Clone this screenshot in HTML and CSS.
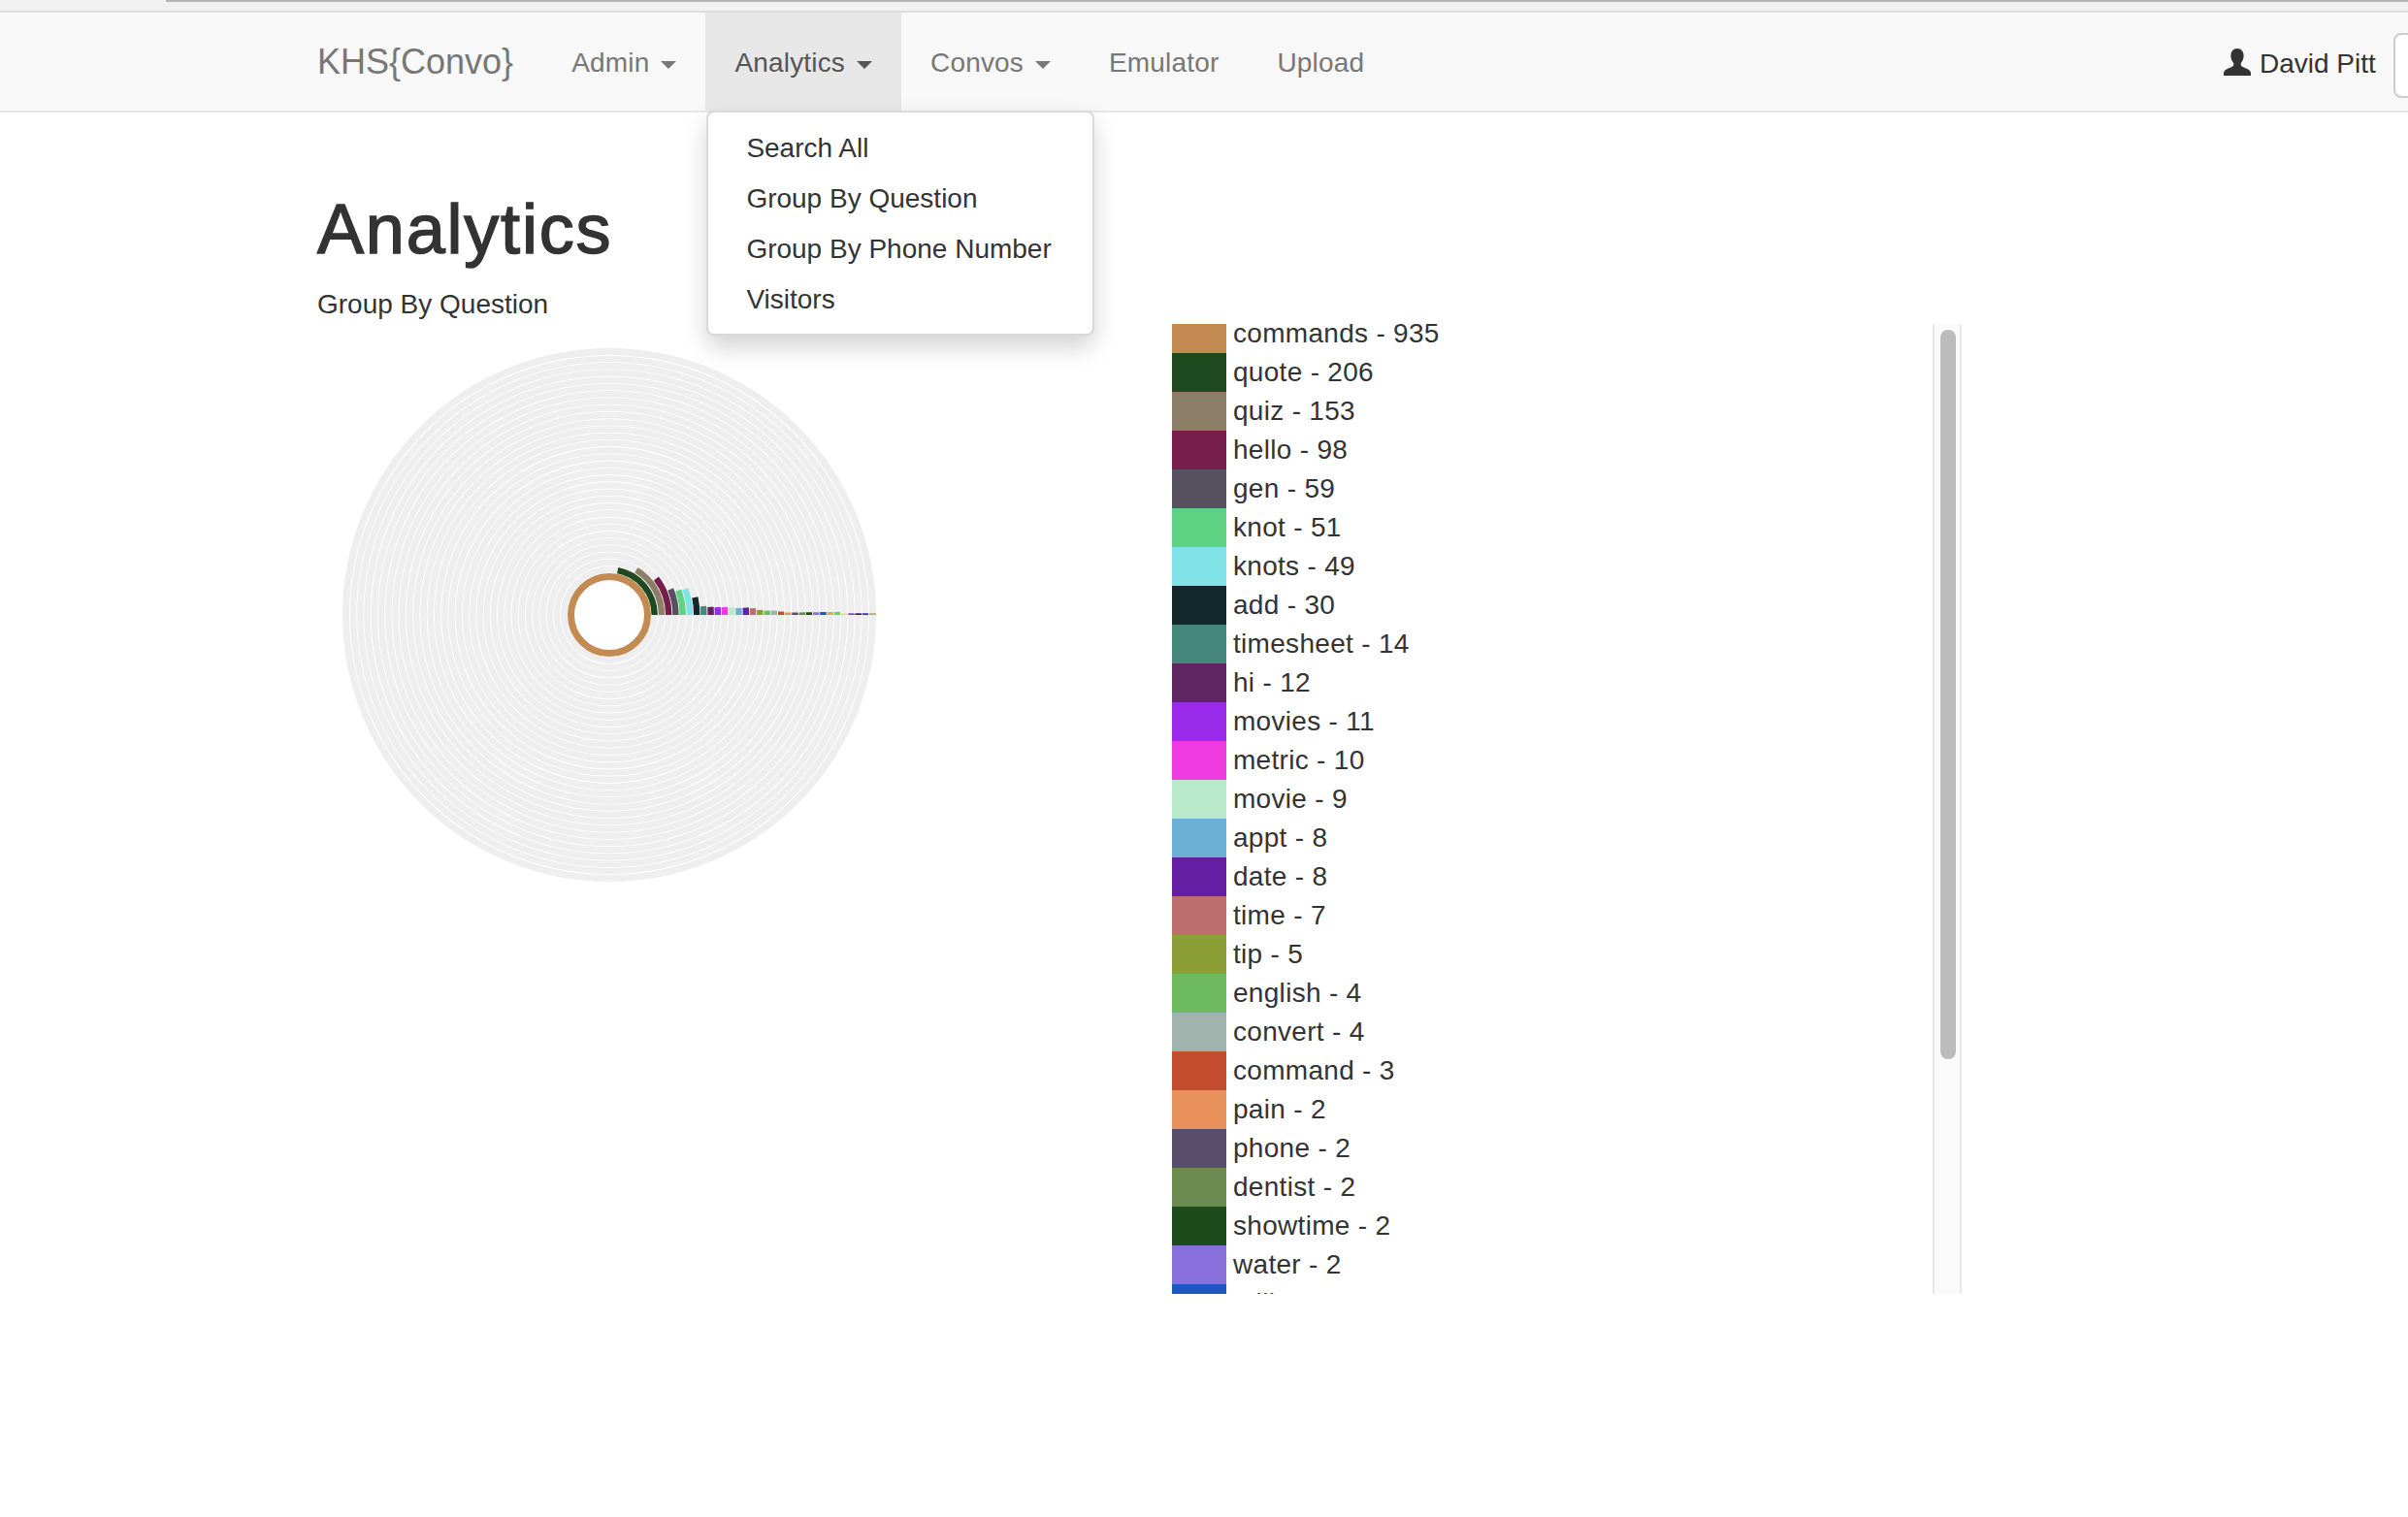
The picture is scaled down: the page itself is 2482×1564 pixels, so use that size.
FILE: index.html
```html
<!DOCTYPE html>
<html lang="en">
<head>
  <meta charset="UTF-8">
  <title>KHS{Convo} Analytics</title>
  <link rel="stylesheet" href="styles.css">
</head>
<body>
<div class="browser-strip"><div class="strip-line"></div></div>
<nav class="navbar">
  <a class="brand">KHS{Convo}</a>
  <ul class="nav-items">
    <li class="nav-item">Admin <span class="caret"></span></li>
    <li class="nav-item active">Analytics <span class="caret"></span>
      <ul class="dropdown">
        <li>Search All</li>
        <li>Group By Question</li>
        <li>Group By Phone Number</li>
        <li>Visitors</li>
      </ul>
    </li>
    <li class="nav-item">Convos <span class="caret"></span></li>
    <li class="nav-item">Emulator</li>
    <li class="nav-item">Upload</li>
  </ul>
  <div class="user">
    <svg class="user-icon" viewBox="0 0 28 28"><path d="M14 0c-4.200 0-6.600 3.200-6.600 7.600 0 3 1 5.400 2.600 7.200.5.600.5 2 0 2.800-.6 1.100-2.200 1.800-4.400 2.700C2.800 21.400.6 22.500 0 25v3h28v-3c-.6-2.500-2.800-3.600-5.600-4.700-2.200-.9-3.800-1.600-4.400-2.700-.5-.8-.5-2.200 0-2.800 1.600-1.800 2.600-4.200 2.600-7.200C20.600 3.200 18.200 0 14 0z"/></svg>
    <span class="user-name">David Pitt</span>
    <button class="user-btn"></button>
  </div>
</nav>
<div class="content">
  <div class="left-col">
    <h1>Analytics</h1>
    <p class="sub">Group By Question</p>
    <svg class="chart" viewBox="-275 -275 550 550">
      <g class="tracks">
        <circle r="39.5"/><circle r="46.7"/><circle r="54"/><circle r="61.2"/><circle r="68.5"/><circle r="75.7"/><circle r="82.9"/><circle r="90.2"/><circle r="97.4"/><circle r="104.7"/><circle r="111.9"/>
        <circle r="119.1"/><circle r="126.4"/><circle r="133.6"/><circle r="140.9"/><circle r="148.1"/><circle r="155.3"/><circle r="162.6"/><circle r="169.8"/><circle r="177.1"/><circle r="184.3"/><circle r="191.5"/>
        <circle r="198.8"/><circle r="206"/><circle r="213.3"/><circle r="220.5"/><circle r="227.7"/><circle r="235"/><circle r="242.2"/><circle r="249.5"/><circle r="256.7"/><circle r="263.9"/><circle r="271.5"/>
      </g>
      <g class="arcs">
        <circle class="first-arc" r="39.5" pathLength="935" stroke="#c38a51" stroke-dasharray="935 935"/>
        <circle r="46.7" pathLength="935" stroke="#1f4a20" stroke-dasharray="206 935"/>
        <circle r="54" pathLength="935" stroke="#8d7f67" stroke-dasharray="153 935"/>
        <circle r="61.2" pathLength="935" stroke="#771f4a" stroke-dasharray="98 935"/>
        <circle r="68.5" pathLength="935" stroke="#56505f" stroke-dasharray="59 935"/>
        <circle r="75.7" pathLength="935" stroke="#5dd283" stroke-dasharray="51 935"/>
        <circle r="82.9" pathLength="935" stroke="#82e3e6" stroke-dasharray="49 935"/>
        <circle r="90.2" pathLength="935" stroke="#12282b" stroke-dasharray="30 935"/>
        <circle r="97.4" pathLength="935" stroke="#46877b" stroke-dasharray="14 935"/>
        <circle r="104.7" pathLength="935" stroke="#5f2461" stroke-dasharray="12 935"/>
        <circle r="111.9" pathLength="935" stroke="#9b2bea" stroke-dasharray="11 935"/>
        <circle r="119.1" pathLength="935" stroke="#f03be0" stroke-dasharray="10 935"/>
        <circle r="126.4" pathLength="935" stroke="#b8eaca" stroke-dasharray="9 935"/>
        <circle r="133.6" pathLength="935" stroke="#6bb1d6" stroke-dasharray="8 935"/>
        <circle r="140.9" pathLength="935" stroke="#641ea3" stroke-dasharray="8 935"/>
        <circle r="148.1" pathLength="935" stroke="#bf6e6e" stroke-dasharray="7 935"/>
        <circle r="155.3" pathLength="935" stroke="#8c9f37" stroke-dasharray="5 935"/>
        <circle r="162.6" pathLength="935" stroke="#6cb960" stroke-dasharray="4 935"/>
        <circle r="169.8" pathLength="935" stroke="#a0b3ac" stroke-dasharray="4 935"/>
        <circle r="177.1" pathLength="935" stroke="#c54d2f" stroke-dasharray="3 935"/>
        <circle r="184.3" pathLength="935" stroke="#e8915b" stroke-dasharray="2 935"/>
        <circle r="191.5" pathLength="935" stroke="#584d6c" stroke-dasharray="2 935"/>
        <circle r="198.8" pathLength="935" stroke="#6b8a50" stroke-dasharray="2 935"/>
        <circle r="206" pathLength="935" stroke="#1d4a1a" stroke-dasharray="2 935"/>
        <circle r="213.3" pathLength="935" stroke="#886fdc" stroke-dasharray="2 935"/>
        <circle r="220.5" pathLength="935" stroke="#2053c4" stroke-dasharray="2 935"/>
        <circle r="227.7" pathLength="935" stroke="#c4b84a" stroke-dasharray="2 935"/>
        <circle r="235" pathLength="935" stroke="#6fd44f" stroke-dasharray="2 935"/>
        <circle r="242.2" pathLength="935" stroke="#e8dc6a" stroke-dasharray="1 935"/>
        <circle r="249.5" pathLength="935" stroke="#7a4fa8" stroke-dasharray="1 935"/>
        <circle r="256.7" pathLength="935" stroke="#4a1a60" stroke-dasharray="1 935"/>
        <circle r="263.9" pathLength="935" stroke="#3333cc" stroke-dasharray="1 935"/>
        <circle r="271.5" pathLength="935" stroke="#b5b060" stroke-dasharray="1 935"/>
      </g>
    </svg>
  </div>
  <div class="legend-box">
    <ul class="legend">
      <li><span class="swatch c1"></span>commands - 935</li>
      <li><span class="swatch c2"></span>quote - 206</li>
      <li><span class="swatch c3"></span>quiz - 153</li>
      <li><span class="swatch c4"></span>hello - 98</li>
      <li><span class="swatch c5"></span>gen - 59</li>
      <li><span class="swatch c6"></span>knot - 51</li>
      <li><span class="swatch c7"></span>knots - 49</li>
      <li><span class="swatch c8"></span>add - 30</li>
      <li><span class="swatch c9"></span>timesheet - 14</li>
      <li><span class="swatch c10"></span>hi - 12</li>
      <li><span class="swatch c11"></span>movies - 11</li>
      <li><span class="swatch c12"></span>metric - 10</li>
      <li><span class="swatch c13"></span>movie - 9</li>
      <li><span class="swatch c14"></span>appt - 8</li>
      <li><span class="swatch c15"></span>date - 8</li>
      <li><span class="swatch c16"></span>time - 7</li>
      <li><span class="swatch c17"></span>tip - 5</li>
      <li><span class="swatch c18"></span>english - 4</li>
      <li><span class="swatch c19"></span>convert - 4</li>
      <li><span class="swatch c20"></span>command - 3</li>
      <li><span class="swatch c21"></span>pain - 2</li>
      <li><span class="swatch c22"></span>phone - 2</li>
      <li><span class="swatch c23"></span>dentist - 2</li>
      <li><span class="swatch c24"></span>showtime - 2</li>
      <li><span class="swatch c25"></span>water - 2</li>
      <li><span class="swatch c26"></span>mill - 2</li>
    </ul>
    <div class="scrollbar"><div class="thumb"></div></div>
  </div>
</div>
</body>
</html>
```
FILE: styles.css
```css
html, body {margin: 0; height: 100%; overflow: hidden; background: #fff;}
body {font-family: "Liberation Sans", Arial, sans-serif; font-size: 28px; line-height: 40px; color: #333;}
ul {list-style: none; margin: 0; padding: 0;}

.browser-strip {height: 11px; background: #f1f1f1; border-bottom: 2px solid #ddd;}
.strip-line {margin-left: 171px; height: 2px; background: #b5b5b5;}

.navbar {display: flex; height: 101px; background: #f8f8f8; border-bottom: 2px solid #e7e7e7; padding-left: 327px; white-space: nowrap;}
.brand {font-size: 36px; color: #777; padding: 31px 30px 30px 0;}
.nav-items {display: flex;}
.nav-item {position: relative; padding: 32px 30px 29px; color: #777; letter-spacing: .18px;}
.nav-item.active {background: #e7e7e7; color: #555;}
.caret {display: inline-block; width: 0; height: 0; margin-left: 4px; vertical-align: middle; border-top: 8px solid; border-left: 8px solid transparent; border-right: 8px solid transparent;}

.dropdown {position: absolute; top: 101px; left: 1px; width: 396px; padding: 11px 0 9px; background: #fff; color: #333; letter-spacing: 0; border: 2px solid rgba(0,0,0,.15); border-radius: 8px; box-shadow: 0 12px 24px rgba(0,0,0,.175);}
.dropdown li {padding: 6px 39px;}

.user {display: flex; align-items: center; margin-left: auto; width: 190px; flex: none;}
.user-icon {width: 28px; height: 28px; fill: #333; flex: none; margin: 1px 9px 0 0;}
.user-name {flex: none; margin-top: 4px;}
.user-btn {flex: none; align-self: flex-start; width: 100px; height: 67px; margin: 21px 0 0 18px; background: #fff; border: 2px solid #ccc; border-radius: 8px;}

.content {display: flex; padding-left: 327px;}
.left-col {width: 881px; flex: none; padding-top: 81px;}
h1 {margin: 0 0 18px; font-size: 72px; font-weight: 500; line-height: 79px; letter-spacing: 1.8px; -webkit-text-stroke: 1.5px #333;}
.sub {margin: 0;}
.chart {display: block; width: 550px; height: 550px; margin: 25px 0 0 26px;}
.chart circle {fill: none; stroke-width: 6.4;}
.chart .first-arc {stroke-width: 7;}
.chart circle:last-child {stroke-width: 7;}
.tracks circle {stroke: #eee;}
.arcs {transform: scaleY(-1);}

.legend-box {display: flex; width: 814px; height: 1000px; margin-top: 218px; overflow: hidden;}
.legend {flex: 1; margin-top: -10px; letter-spacing: .3px;}
.legend li {display: flex; height: 40px;}
.swatch {width: 56px; height: 40px; margin-right: 7px; flex: none;}
.c1 {background: #c38a51;} .c2 {background: #1f4a20;} .c3 {background: #8d7f67;} .c4 {background: #771f4a;}
.c5 {background: #56505f;} .c6 {background: #5dd283;} .c7 {background: #82e3e6;} .c8 {background: #12282b;}
.c9 {background: #46877b;} .c10 {background: #5f2461;} .c11 {background: #9b2bea;} .c12 {background: #f03be0;}
.c13 {background: #b8eaca;} .c14 {background: #6bb1d6;} .c15 {background: #641ea3;} .c16 {background: #bf6e6e;}
.c17 {background: #8c9f37;} .c18 {background: #6cb960;} .c19 {background: #a0b3ac;} .c20 {background: #c54d2f;}
.c21 {background: #e8915b;} .c22 {background: #584d6c;} .c23 {background: #6b8a50;} .c24 {background: #1d4a1a;}
.c25 {background: #886fdc;} .c26 {background: #2053c4;}

.scrollbar {flex: none; width: 30px; box-sizing: border-box; padding: 6px 0 0 6px; background: #fafafa; border-left: 2px solid #e8e8e8; border-right: 2px solid #e8e8e8;}
.thumb {width: 16px; height: 752px; border-radius: 8px; background: #bbb;}
```
